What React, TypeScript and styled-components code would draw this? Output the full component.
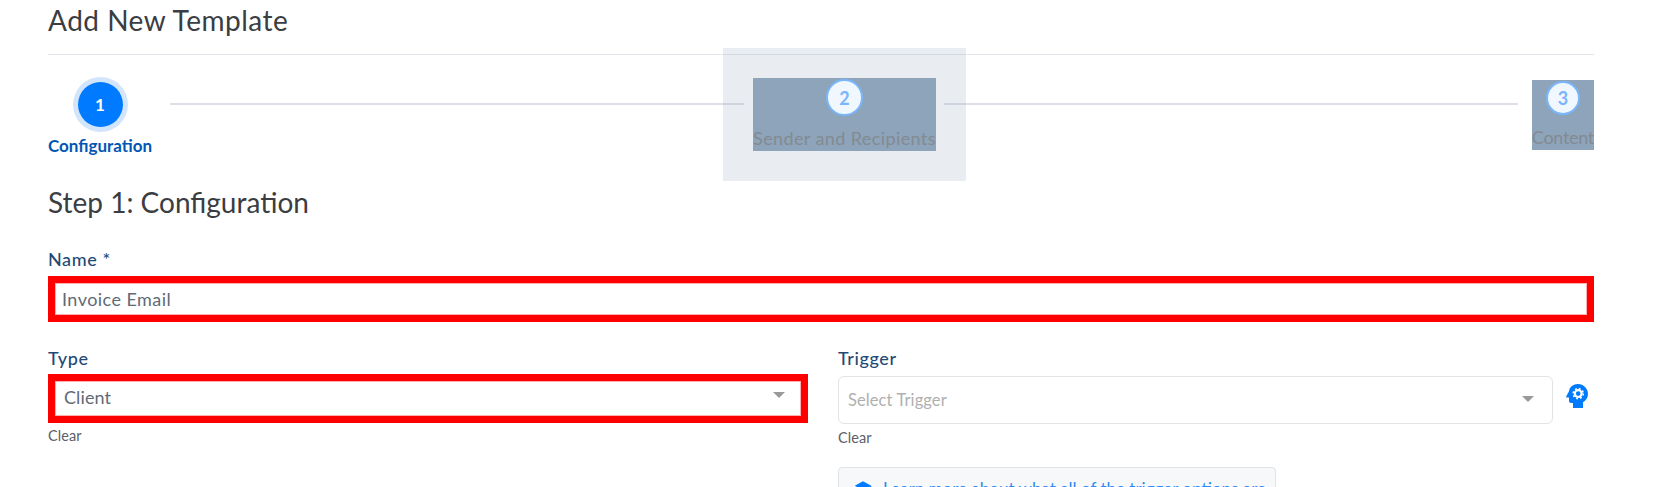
import React from 'react';
import styled, { createGlobalStyle } from 'styled-components';

const GlobalStyle = createGlobalStyle`
  html, body {
    margin: 0;
    padding: 0;
    background: #fff;
    overflow: hidden;
  }
  body {
    font-family: "Lato", "Open Sans", sans-serif;
    color: #2f3237;
  }
`;

const Page = styled.div`
  width: 1546px;
  height: 487px;
  margin-left: 48px;
  overflow: hidden;
`;

const PageTitle = styled.h1`
  margin: 0;
  height: 55px;
  padding-top: 4px;
  box-sizing: border-box;
  border-bottom: 1px solid #e2e5e9;
  font-size: 28px;
  line-height: 32px;
  font-weight: 400;
  letter-spacing: 0.5px;
  color: #3a3d42;
`;

const Stepper = styled.div`
  display: flex;
  justify-content: space-between;
  align-items: flex-start;
  height: 108px;
  padding-top: 23px;
`;

const CurrentStep = styled.div`
  display: flex;
  flex-direction: column;
  align-items: center;
  flex: none;
`;

const PendingStep = styled.div<{ $top: number; $height: number; $spotlight?: boolean }>`
  display: flex;
  flex-direction: column;
  align-items: center;
  flex: none;
  position: relative;
  margin-top: ${p => p.$top}px;
  height: ${p => p.$height}px;
  background: #8da4ba;
  ${p => p.$spotlight && 'box-shadow: 0 0 0 30px rgba(140, 160, 185, 0.19);'}
`;

const CurrentCircle = styled.div`
  display: flex;
  align-items: center;
  justify-content: center;
  width: 45px;
  height: 45px;
  margin-top: 4px;
  border-radius: 50%;
  background: #007bff;
  color: #fff;
  font-size: 17px;
  font-weight: 700;
  box-shadow: 0 0 0 5px #d2e5fb;
`;

const PendingCircle = styled.div<{ $size: number }>`
  box-sizing: border-box;
  display: flex;
  align-items: center;
  justify-content: center;
  width: ${p => p.$size}px;
  height: ${p => p.$size}px;
  margin-top: 1px;
  border-radius: 50%;
  background: #f0f7ff;
  border: 2px solid #7ab6fb;
  color: #7ab6fb;
  font-size: 18px;
  font-weight: 700;
`;

const CurrentLabel = styled.div`
  margin-top: 9px;
  white-space: nowrap;
  font-size: 17px;
  line-height: 20px;
  font-weight: 700;
  color: #0056b3;
`;

const PendingLabel = styled.div<{ $spacing: number }>`
  margin-top: 11px;
  white-space: nowrap;
  font-size: 18px;
  line-height: 22px;
  letter-spacing: ${p => p.$spacing}px;
  color: #838a92;
`;

const Connector = styled.div<{ $left: number; $right: number }>`
  flex: 1;
  height: 2px;
  background: #dde1e7;
  margin: 25px ${p => p.$right}px 0 ${p => p.$left}px;
`;

const StepTitle = styled.h2`
  margin: 0;
  font-size: 28px;
  line-height: 32px;
  font-weight: 400;
  color: #3a3d42;
`;

const Label = styled.label`
  display: block;
  font-size: 18px;
  line-height: 22px;
  font-weight: 500;
  letter-spacing: 0.6px;
  color: #1f4a75;
`;

const NameField = styled.div`
  margin-top: 30px;
`;

const HighlightInput = styled.div`
  box-sizing: border-box;
  display: flex;
  align-items: center;
  height: 46px;
  margin-top: 6px;
  border: 7px solid #ff0000;
  box-shadow: inset 0 0 0 1px #ffb0b0;
  padding: 0 16px 0 7px;
  font-size: 18px;
  letter-spacing: 0.45px;
  color: #616a76;
`;

const HighlightSelect = styled(HighlightInput)`
  width: 760px;
  height: 49px;
  margin-top: 5px;
  justify-content: space-between;
  padding: 0 16px 4px 9px;
  letter-spacing: 0.1px;
`;

const Columns = styled.div`
  display: flex;
  margin-top: 25px;
  align-items: flex-start;
`;

const Column = styled.div<{ $width: number }>`
  width: ${p => p.$width}px;
  flex: none;
`;

const Caret = styled.span`
  width: 0;
  height: 0;
  margin-bottom: 3px;
  border-left: 6px solid transparent;
  border-right: 6px solid transparent;
  border-top: 6px solid #999;
`;

const ClearLink = styled.div<{ $top: number }>`
  margin-top: ${p => p.$top}px;
  font-size: 14.5px;
  line-height: 18px;
  letter-spacing: 0.1px;
  color: #5c6066;
`;

const TriggerRow = styled.div`
  display: flex;
  align-items: flex-start;
  gap: 13px;
  margin-top: 7px;
`;

const TriggerSelect = styled.div`
  box-sizing: border-box;
  width: 715px;
  height: 48px;
  display: flex;
  align-items: center;
  justify-content: space-between;
  border: 1px solid #e3e3e5;
  border-radius: 6px;
  padding: 0 18px 0 9px;
  font-size: 16.5px;
  letter-spacing: 0.1px;
  color: #b0b0b0;
`;

const HeadIcon = styled.svg`
  width: 22px;
  height: 24px;
  margin-top: 8px;
  flex: none;
  color: #007bff;
`;

const InfoBox = styled.div`
  box-sizing: border-box;
  width: 438px;
  height: 60px;
  margin-top: 20px;
  background: #f6f8fa;
  border: 1px solid #dfe3e8;
  border-radius: 4px;
  padding: 10px 15px;
  display: flex;
  gap: 11px;
  font-size: 17px;
  color: #2f8af5;
  white-space: nowrap;
`;

const InfoMark = styled.svg`
  width: 18px;
  height: 18px;
  margin-top: 1px;
  flex: none;
  color: #007bff;
`;

export default function App() {
  return (
    <>
      <GlobalStyle />
      <Page>
        <PageTitle>Add New Template</PageTitle>
        <Stepper>
          <CurrentStep>
            <CurrentCircle>1</CurrentCircle>
            <CurrentLabel>Configuration</CurrentLabel>
          </CurrentStep>
          <Connector $left={18} $right={9} />
          <PendingStep $top={0} $height={73} $spotlight>
            <PendingCircle $size={37}>2</PendingCircle>
            <PendingLabel $spacing={0.4}>Sender and Recipients</PendingLabel>
          </PendingStep>
          <Connector $left={8} $right={14} />
          <PendingStep $top={2} $height={70}>
            <PendingCircle $size={34}>3</PendingCircle>
            <PendingLabel $spacing={-0.3}>Content</PendingLabel>
          </PendingStep>
        </Stepper>
        <StepTitle>Step 1: Configuration</StepTitle>
        <NameField>
          <Label>Name *</Label>
          <HighlightInput>Invoice Email</HighlightInput>
        </NameField>
        <Columns>
          <Column $width={790}>
            <Label>Type</Label>
            <HighlightSelect>
              Client
              <Caret />
            </HighlightSelect>
            <ClearLink $top={4}>Clear</ClearLink>
          </Column>
          <Column $width={756}>
            <Label>Trigger</Label>
            <TriggerRow>
              <TriggerSelect>
                Select Trigger
                <Caret />
              </TriggerSelect>
              <HeadIcon viewBox="0 0 22 24">
                <path
                  fill="currentColor"
                  d="M12 0C7.2 0 3.6 3 3 7.2L0.2 12.4C-0.1 13 0.3 13.6 1 13.6H3V17C3 18.1 3.9 19 5 19H7V24H17V18.2C20 16.4 22 13.4 22 10C22 4.5 17.5 0 12 0Z"
                />
                <circle cx="12.2" cy="9.6" r="3.4" fill="none" stroke="#fff" strokeWidth="2.2" />
                <circle
                  cx="12.2"
                  cy="9.6"
                  r="5"
                  fill="none"
                  stroke="#fff"
                  strokeWidth="1.6"
                  strokeDasharray="1.9 2.02"
                />
              </HeadIcon>
            </TriggerRow>
            <ClearLink $top={5}>Clear</ClearLink>
            <InfoBox>
              <InfoMark viewBox="0 0 24 24" fill="currentColor">
                <path d="M12 3 1 9l11 6 9-4.9V17h2V9L12 3z" />
                <path d="M5 13.2V17l7 4 7-4v-3.8L12 17l-7-3.8z" />
              </InfoMark>
              Learn more about what all of the trigger options are
            </InfoBox>
          </Column>
        </Columns>
      </Page>
    </>
  );
}
